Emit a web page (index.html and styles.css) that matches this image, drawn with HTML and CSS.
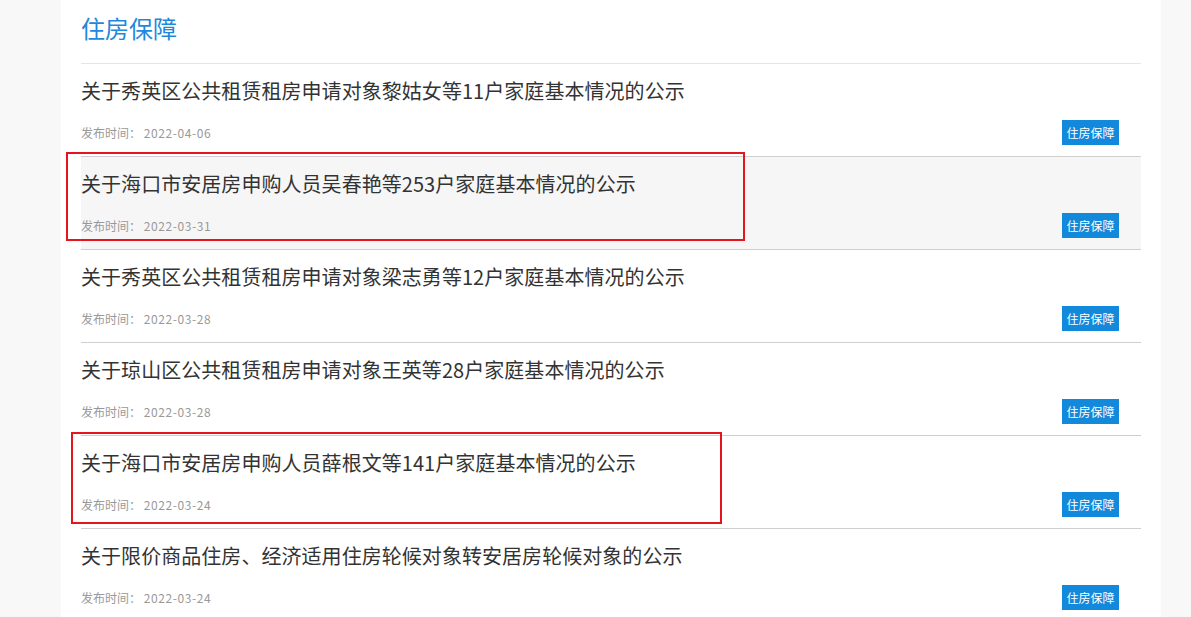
FILE: index.html
```html
<!DOCTYPE html>
<html lang="zh-CN">
<head>
<meta charset="utf-8">
<title>住房保障</title>
<link rel="stylesheet" href="styles.css">
</head>
<body>
<div class="page">
  <div class="panel">
    <h1 class="heading">住房保障</h1>
    <ul class="list">
      <li class="item">
        <a class="item-title" href="#">关于秀英区公共租赁租房申请对象黎姑女等11户家庭基本情况的公示</a>
        <div class="meta"><span class="date">发布时间： <span class="num">2022-04-06</span></span><span class="tag">住房保障</span></div>
      </li>
      <li class="item item-hover">
        <a class="item-title" href="#">关于海口市安居房申购人员吴春艳等253户家庭基本情况的公示</a>
        <div class="meta"><span class="date">发布时间： <span class="num">2022-03-31</span></span><span class="tag">住房保障</span></div>
      </li>
      <li class="item">
        <a class="item-title" href="#">关于秀英区公共租赁租房申请对象梁志勇等12户家庭基本情况的公示</a>
        <div class="meta"><span class="date">发布时间： <span class="num">2022-03-28</span></span><span class="tag">住房保障</span></div>
      </li>
      <li class="item">
        <a class="item-title" href="#">关于琼山区公共租赁租房申请对象王英等28户家庭基本情况的公示</a>
        <div class="meta"><span class="date">发布时间： <span class="num">2022-03-28</span></span><span class="tag">住房保障</span></div>
      </li>
      <li class="item">
        <a class="item-title" href="#">关于海口市安居房申购人员薛根文等141户家庭基本情况的公示</a>
        <div class="meta"><span class="date">发布时间： <span class="num">2022-03-24</span></span><span class="tag">住房保障</span></div>
      </li>
      <li class="item">
        <a class="item-title" href="#">关于限价商品住房、经济适用住房轮候对象转安居房轮候对象的公示</a>
        <div class="meta"><span class="date">发布时间： <span class="num">2022-03-24</span></span><span class="tag">住房保障</span></div>
      </li>
    </ul>
  </div>
  <div class="mark mark-one"></div>
  <div class="mark mark-two"></div>
</div>
</body>
</html>
```

FILE: styles.css
```css
* { box-sizing: border-box; }
html, body { margin: 0; padding: 0; }
body {
  background: #f8f8f8;
  font-family: "Noto Sans CJK SC", "Noto Sans", sans-serif;
  overflow: hidden;
}
.page {
  position: relative;
  width: 1191px;
  height: 617px;
  overflow: hidden;
}
.panel {
  width: 1100px;
  margin-left: 61px;
  background: #fff;
  padding: 0 20px;
  min-height: 700px;
}
.heading {
  margin: 0;
  padding: 10px 0 17px;
  font-size: 24px;
  line-height: 36px;
  font-weight: normal;
  color: #1e88dc;
  border-bottom: 1px solid #e6e6e6;
}
.list {
  list-style: none;
  margin: 0;
  padding: 0;
}
.item {
  padding: 12px 0 11px;
  border-bottom: 1px solid #cfcfcf;
  display: flex;
  flex-direction: column;
  gap: 14px;
}
.item-hover { background: #f6f6f6; }
.item-title {
  font-size: 20px;
  line-height: 30px;
  color: #333;
  text-decoration: none;
  letter-spacing: 0.05px;
}
.meta {
  display: flex;
  justify-content: space-between;
  align-items: center;
  height: 25px;
  padding-right: 22px;
}
.date {
  font-size: 12px;
  color: #999;
}
.num { letter-spacing: 0.6px; }
.tag {
  display: inline-flex;
  align-items: center;
  justify-content: center;
  width: 57px;
  height: 25px;
  background: #1289db;
  color: #fff;
  font-size: 12px;
}
.mark {
  position: absolute;
  border: 2px solid #e5141d;
}
.mark-one { left: 66px; top: 152px; width: 679px; height: 89px; }
.mark-two { left: 71px; top: 432px; width: 651px; height: 92px; }
```
